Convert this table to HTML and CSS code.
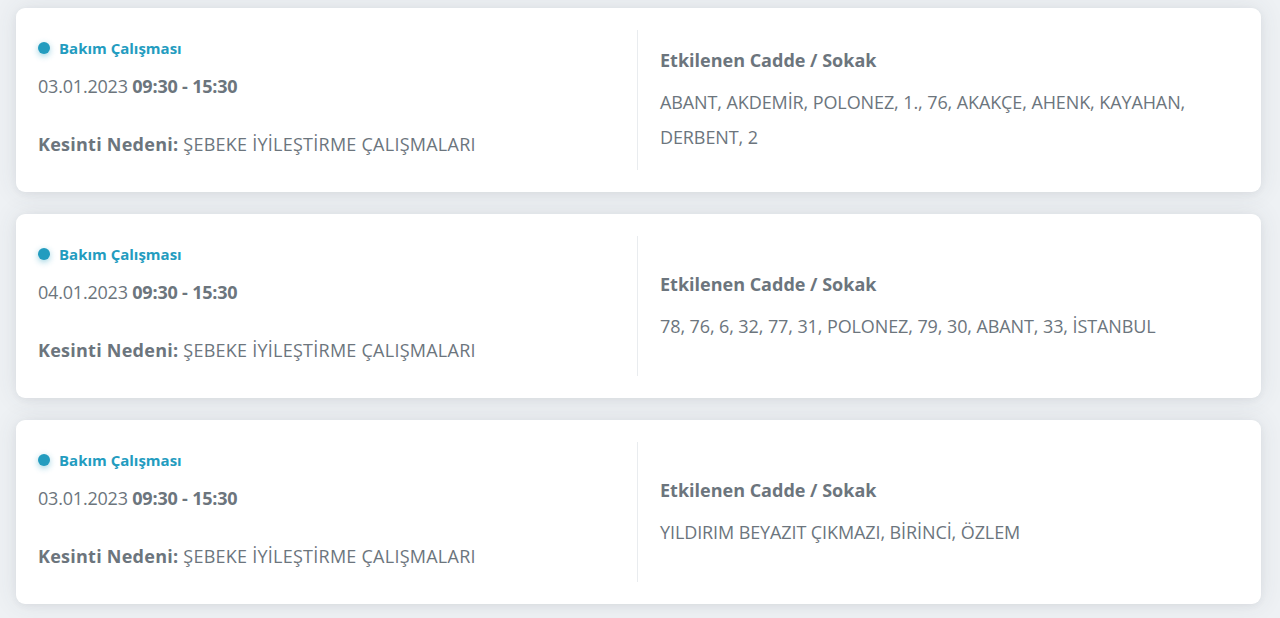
FILE: index.html
```html
<!DOCTYPE html>
<html lang="tr">
<head>
<meta charset="utf-8">
<title>Kesintiler</title>
<link rel="stylesheet" href="styles.css">
</head>
<body>
<main class="list">
  <section class="card">
    <div class="info">
      <div class="badge"><span class="dot"></span>Bakım Çalışması</div>
      <div class="date">03.01.2023 <b>09:30 - 15:30</b></div>
      <div class="reason"><b>Kesinti Nedeni:</b> ŞEBEKE İYİLEŞTİRME ÇALIŞMALARI</div>
    </div>
    <div class="streets">
      <div class="streets-title">Etkilenen Cadde / Sokak</div>
      <div class="streets-list">ABANT, AKDEMİR, POLONEZ, 1., 76, AKAKÇE, AHENK, KAYAHAN, DERBENT, 2</div>
    </div>
  </section>
  <section class="card">
    <div class="info">
      <div class="badge"><span class="dot"></span>Bakım Çalışması</div>
      <div class="date">04.01.2023 <b>09:30 - 15:30</b></div>
      <div class="reason"><b>Kesinti Nedeni:</b> ŞEBEKE İYİLEŞTİRME ÇALIŞMALARI</div>
    </div>
    <div class="streets">
      <div class="streets-title">Etkilenen Cadde / Sokak</div>
      <div class="streets-list">78, 76, 6, 32, 77, 31, POLONEZ, 79, 30, ABANT, 33, İSTANBUL</div>
    </div>
  </section>
  <section class="card">
    <div class="info">
      <div class="badge"><span class="dot"></span>Bakım Çalışması</div>
      <div class="date">03.01.2023 <b>09:30 - 15:30</b></div>
      <div class="reason"><b>Kesinti Nedeni:</b> ŞEBEKE İYİLEŞTİRME ÇALIŞMALARI</div>
    </div>
    <div class="streets">
      <div class="streets-title">Etkilenen Cadde / Sokak</div>
      <div class="streets-list">YILDIRIM BEYAZIT ÇIKMAZI, BİRİNCİ, ÖZLEM</div>
    </div>
  </section>
</main>
</body>
</html>
```
FILE: styles.css
```css
html, body {
  margin: 0;
  padding: 0;
}
body {
  background: #eef1f4;
  font-family: "Open Sans", "Noto Sans", sans-serif;
  color: #6c757d;
  height: 618px;
  overflow: hidden;
}
.list {
  display: flex;
  flex-direction: column;
  gap: 22px;
  padding: 8px 19px 0 16px;
}
.card {
  display: grid;
  grid-template-columns: 600px 1fr;
  height: 184px;
  box-sizing: border-box;
  padding: 22px;
  background: #fff;
  border-radius: 9px;
  box-shadow: 0 0 24px rgba(60, 70, 80, 0.10), 0 2px 6px rgba(60, 70, 80, 0.06);
}
.info {
  padding-top: 8px;
  border-right: 1px solid #e9ecef;
}
.badge {
  display: flex;
  align-items: center;
  height: 20px;
  font-size: 15px;
  font-weight: 700;
  color: #239cbf;
}
.dot {
  width: 12px;
  height: 12px;
  border-radius: 50%;
  background: #239cbf;
  box-shadow: 0 2px 6px rgba(35, 156, 191, 0.45);
  margin: 0 9px 0 0;
}
.date {
  margin-top: 16px;
  line-height: 24px;
  font-size: 18px;
  letter-spacing: -0.2px;
}
.reason {
  margin-top: 34px;
  line-height: 24px;
  font-size: 18px;
  letter-spacing: 0.25px;
}
b {
  font-weight: 700;
}
.streets {
  display: flex;
  flex-direction: column;
  justify-content: center;
  padding: 3px 0 0 22px;
}
.streets-title {
  font-size: 18px;
  font-weight: 700;
  line-height: 24px;
}
.streets-list {
  margin-top: 13px;
  font-size: 18px;
  line-height: 35px;
  letter-spacing: -0.1px;
}
```
